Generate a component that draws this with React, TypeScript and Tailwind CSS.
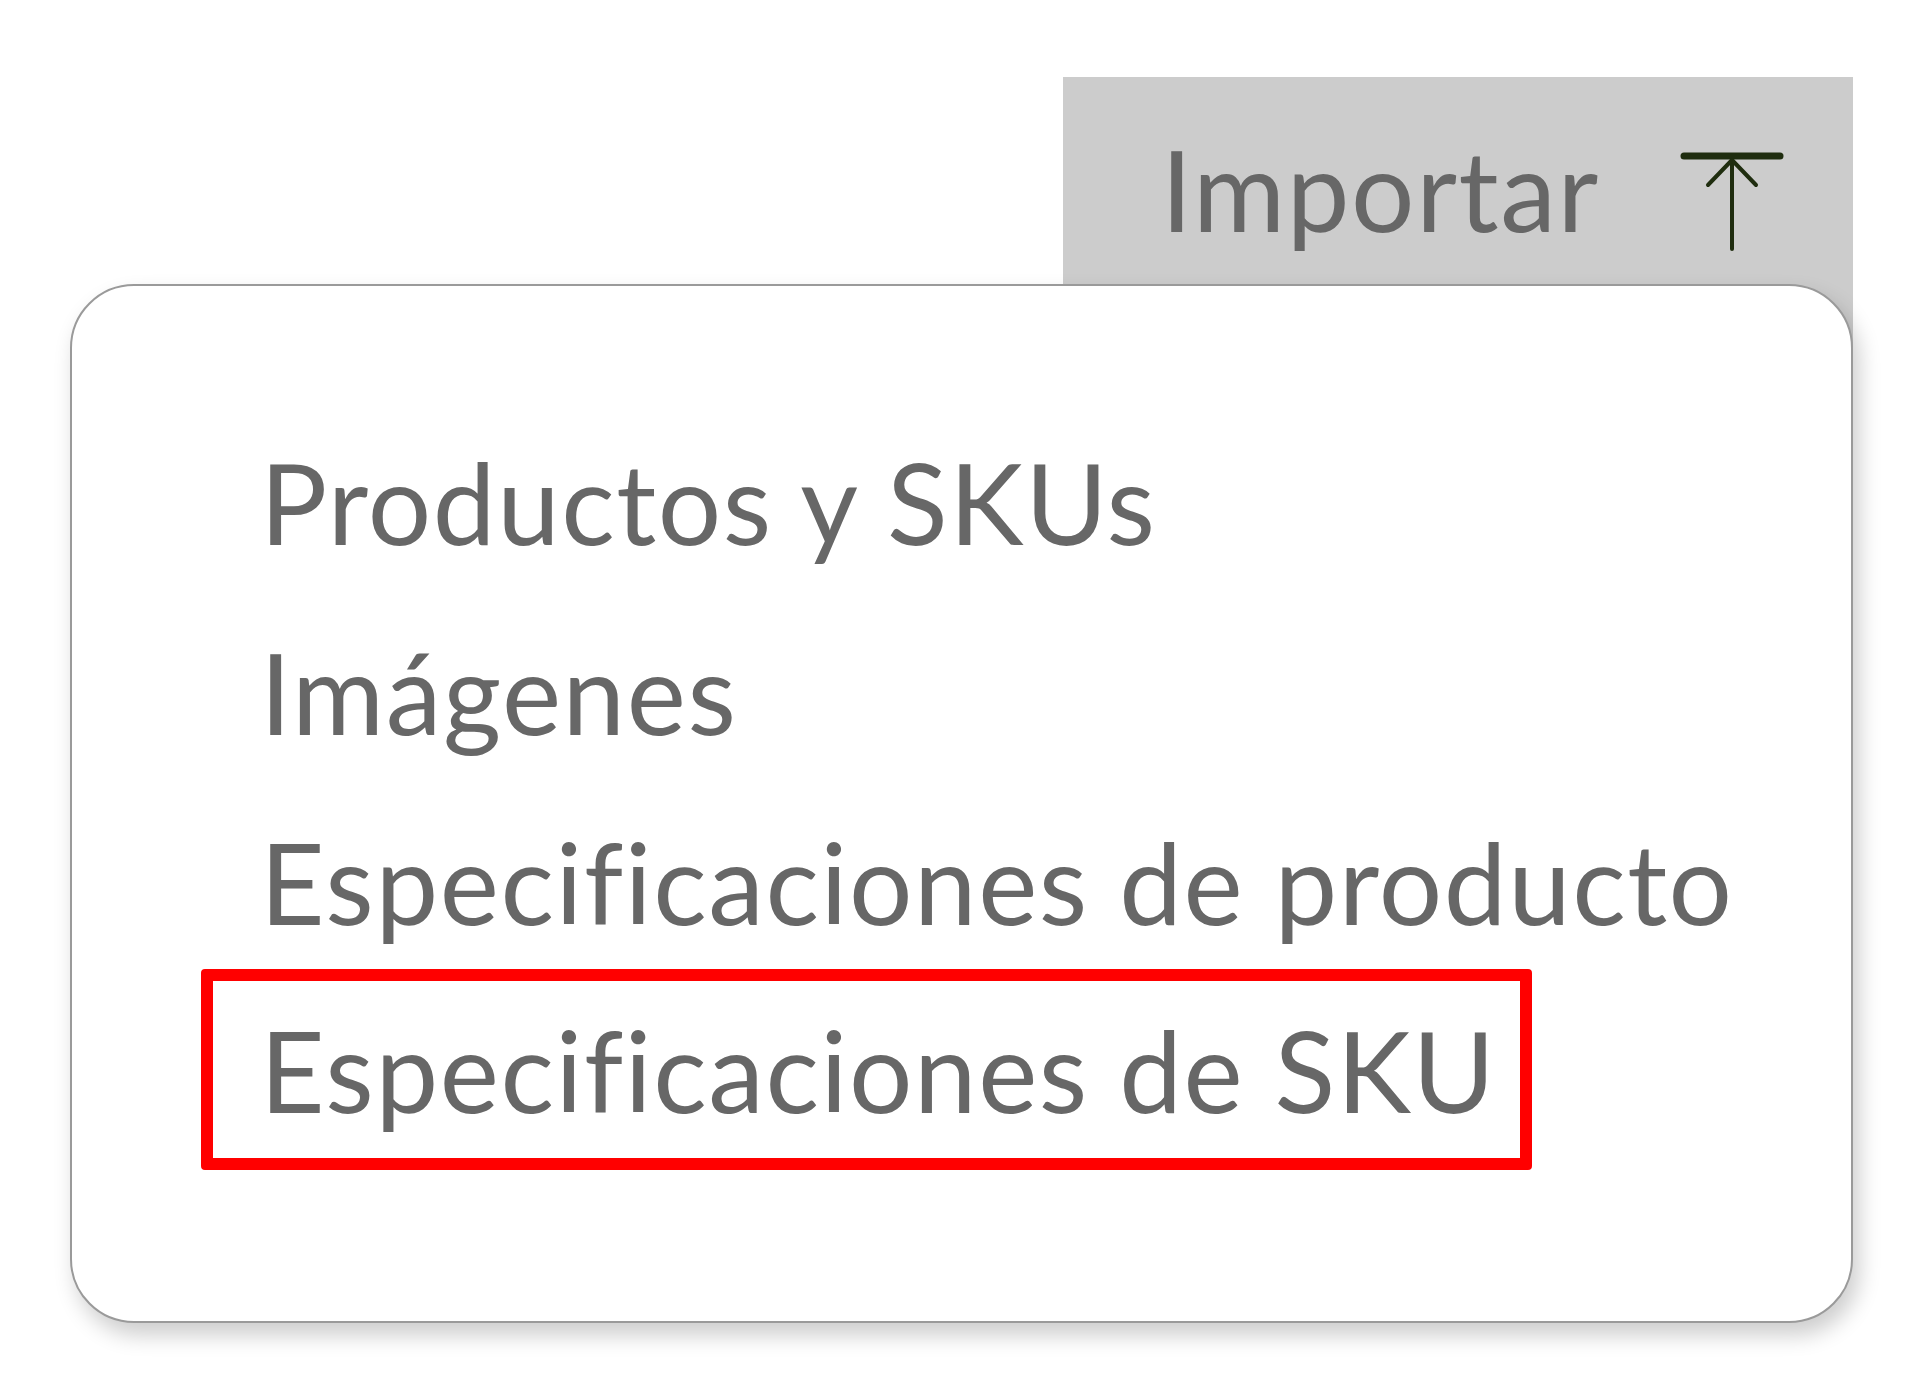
const items = [
  { label: "Productos y SKUs", selected: false },
  { label: "Imágenes", selected: false },
  { label: "Especificaciones de producto", selected: false },
  { label: "Especificaciones de SKU", selected: true },
]

function ImportIcon() {
  return (
    <svg width="104" height="100" viewBox="0 0 104 100" fill="none" stroke="#1f2d0f" strokeLinecap="round" strokeLinejoin="round">
      <line x1="4" y1="4" x2="100" y2="4" strokeWidth="7" />
      <line x1="52" y1="8" x2="52" y2="97" strokeWidth="4" />
      <polyline points="28,33 52,8 76,33" strokeWidth="4" />
    </svg>
  )
}

export default function App() {
  return (
    <div className="min-h-screen bg-white pt-[77px] pl-[70px] pr-[67px] font-['Lato',sans-serif]">
      {/* Header tab */}
      <div className="ml-auto flex h-[271px] w-[790px] items-start justify-between bg-[#cccccc] pl-[98px] pr-[69px] pt-[56px]">
        <span className="text-[112px] leading-[112px] tracking-[0.014em] text-[#676767]">Importar</span>
        <div className="mt-[19px]">
          <ImportIcon />
        </div>
      </div>

      {/* Dropdown card */}
      <div className="relative z-10 -mt-[64px] h-[1039px] rounded-[64px] border-2 border-[#9a9a9a] bg-white pl-[129px] pt-[121px] shadow-[6px_12px_22px_rgba(0,0,0,0.2)]">
        {items.map((item) =>
          item.selected ? (
            <div
              key={item.label}
              className="-mt-[8px] flex h-[201px] w-[1331px] items-center rounded-[4px] border-[12px] border-[#ff0000] pl-[47px]"
            >
              <span className="text-[112px] leading-[112px] tracking-[0.014em] text-[#676767]">{item.label}</span>
            </div>
          ) : (
            <div key={item.label} className="flex h-[190px] items-center border-[12px] border-transparent pl-[47px]">
              <span className="text-[112px] leading-[112px] tracking-[0.014em] text-[#676767]">{item.label}</span>
            </div>
          )
        )}
      </div>
    </div>
  )
}
